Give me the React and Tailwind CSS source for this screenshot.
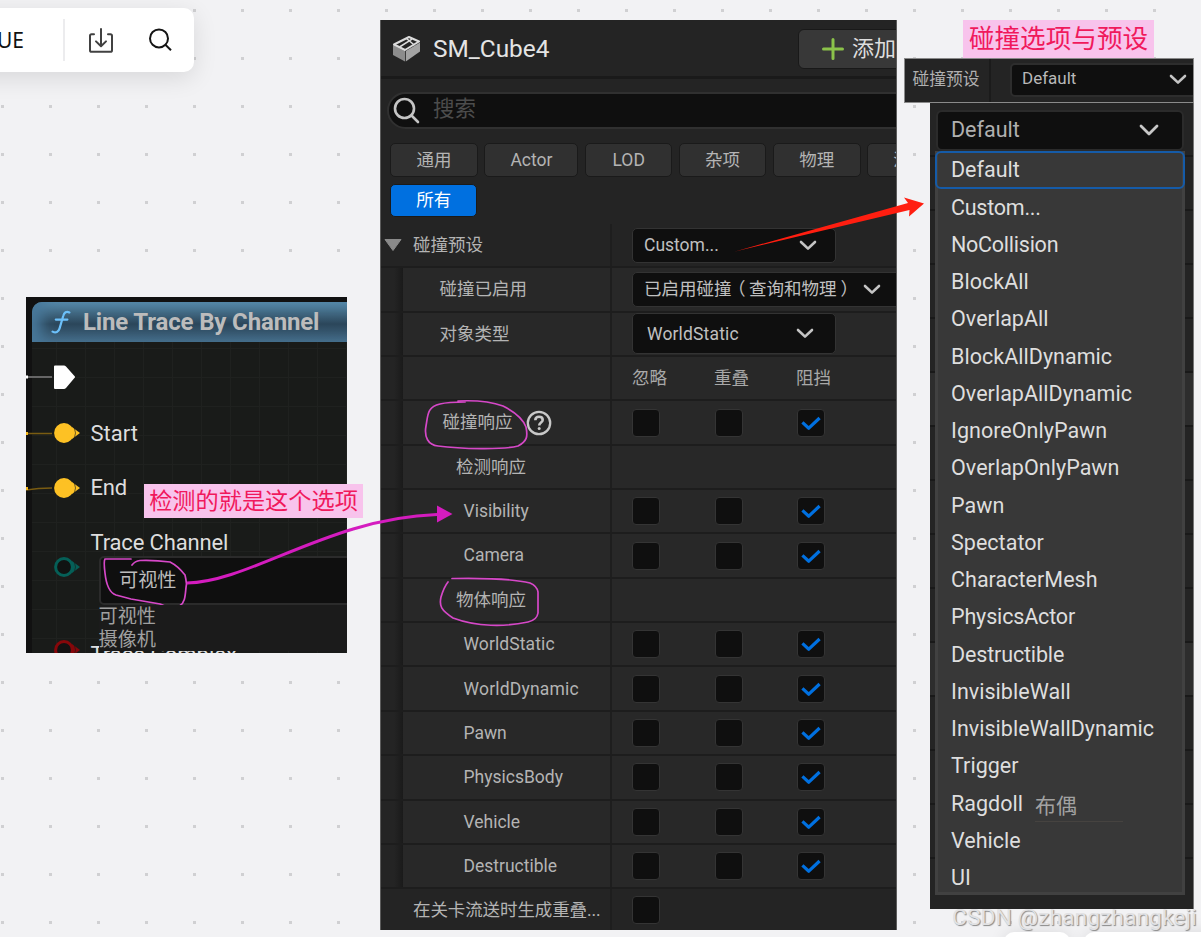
import React from "react";

const sans = "font-['Roboto','Noto_Sans_CJK_SC',sans-serif]";

function Caret({ className = "" }) {
  return (
    <svg width="18" height="11" viewBox="0 0 18 11" className={"shrink-0 " + className} fill="none" stroke="#c4c4c4" strokeWidth="2.6" strokeLinecap="round" strokeLinejoin="round">
      <path d="M2 2 L9 8.6 L16 2" />
    </svg>
  );
}

function CheckBox({ checked }) {
  return (
    <span className="flex size-7 shrink-0 items-center justify-center rounded-[4px] border border-[#343434] bg-[#0f0f0f]">
      {checked && (
        <svg width="22" height="18" viewBox="0 0 22 18" fill="none" stroke="#0070e0" strokeWidth="3.2" strokeLinejoin="round" strokeLinecap="butt">
          <path d="M2.4 8.4 L8.8 14.2 L19.6 4" />
        </svg>
      )}
    </span>
  );
}

function FilterButton({ label, width }) {
  return (
    <div className={"flex h-[34px] shrink-0 items-center justify-center rounded-[5px] border-[1.5px] border-[#1a1a1a] bg-[#303030] pt-px text-[17.5px] text-[#b4b4b4] " + width}>
      {label}
    </div>
  );
}

function Combo({ label, className, pad }) {
  return (
    <div className={"flex shrink-0 items-center rounded-[5px] border border-[#333] bg-[#0f0f0f] text-[17.5px] whitespace-nowrap text-[#c0c0c0] " + className}>
      <span className={"flex-1 " + pad}>{label}</span>
      <Caret />
    </div>
  );
}

function Row({ name, indent, nested = true, help, children }) {
  return (
    <div className={"flex h-[44.36px] shrink-0 border-b-2 border-[#1d1d1d] " + (nested ? "bg-[#282828]" : "bg-[#242424]")}>
      {nested && <div className="w-[22px] shrink-0 bg-linear-to-r from-[#242424] from-60% to-[#1a1a1a]" />}
      <div className={"flex shrink-0 items-center border-r-2 border-[#1e1e1e] text-[17.5px] whitespace-nowrap text-[#b4b4b4] " + (nested ? "w-[209px] " : "w-[231px] ") + indent}>
        {name}
        {help}
      </div>
      <div className="flex flex-1 items-center pl-5">{children}</div>
    </div>
  );
}

function Checks() {
  return (
    <div className="flex gap-[54.5px]">
      <CheckBox />
      <CheckBox />
      <CheckBox checked />
    </div>
  );
}

function Toolbar() {
  return (
    <div className="absolute top-2 left-[-40px] flex h-16 w-[234px] items-center rounded-[10px] bg-white shadow-[0_6px_24px_rgba(0,0,0,0.11)]">
      <span className="ml-[37px] w-[67px] font-['Noto_Sans','Noto_Sans_CJK_SC',sans-serif] text-[21px] leading-none text-[#111]">UE</span>
      <span className="-ml-[1px] h-[42px] w-[2px] bg-[#ececee]" />
      <svg className="-mt-px ml-[23px]" width="26" height="28" viewBox="0 0 26 28" fill="none" stroke="#414141" strokeWidth="2" strokeLinecap="round" strokeLinejoin="round">
        <path d="M6 8.2H3.6Q2 8.2 2 9.8V24.2Q2 25.8 3.6 25.8H22.4Q24 25.8 24 24.2V9.8Q24 8.2 22.4 8.2H20M13 3V20M8 15.4L13 20.2L18 15.4" />
      </svg>
      <svg className="-mt-px ml-[34px]" width="26" height="26" viewBox="0 0 26 26" fill="none" stroke="#151515" strokeWidth="2">
        <circle cx="11" cy="11.4" r="9" />
        <path d="M17.4 17.8L23 23.2" />
      </svg>
    </div>
  );
}

function Pin({ stroke, fill, wire }) {
  return (
    <svg width="62" height="24" viewBox="0 0 62 24" className="shrink-0">
      {wire && <path d={wire} stroke="#7a5c12" strokeWidth="1.5" fill="none" />}
      {wire && <rect x="0" y="11" width="2" height="3" fill="#f5b81c" />}
      <path d="M46 6 L54 12 L46 18Z" fill={stroke} />
      <circle cx="38" cy="12" r="8.4" fill={fill} stroke={stroke} strokeWidth="3" />
      <path d="M48 5.500 Q51 12 48 18.500" stroke="#191b19" strokeOpacity=".7" strokeWidth=".9" fill="none" />
    </svg>
  );
}

function Blueprint() {
  return (
    <div className="absolute top-[297px] left-[26px] h-[356px] w-[321px] overflow-hidden bg-[#111] pt-[5px] pl-[6px]">
      <div className="flex h-[351px] flex-col rounded-tl-[10px] bg-[#191b19] bg-[linear-gradient(#1f211f_1px,transparent_1px),linear-gradient(90deg,#1f211f_1px,transparent_1px)] bg-[length:29px_29px] bg-[position:24px_17px]">
        <div className="flex h-10 shrink-0 items-center overflow-hidden rounded-tl-[10px] bg-linear-to-b from-[#588cac] via-[#2b465a] via-55% to-[#446b87] pl-[19px] shadow-[inset_14px_0_14px_-4px_#48789a]">
          <svg width="20" height="24" viewBox="0 0 20 24" fill="none" stroke="#6cc0fa" strokeWidth="2.2" strokeLinecap="round">
            <path d="M18.4 2.4C15.5 .9 13.1 2.4 12.2 6L8.6 18.4C7.6 22 4.8 23.4 1.6 21.6M4.8 9.6H16.4" />
          </svg>
          <span className="-mt-px ml-[12px] text-[24px] font-bold tracking-[-0.15px] whitespace-nowrap text-[#bcbcbc]">Line Trace By Channel</span>
        </div>
        <div className="-ml-[6px] flex h-[70px] shrink-0 items-center">
          <svg width="52" height="28" viewBox="0 0 52 28">
            <path d="M0 14H26" stroke="#666" strokeWidth="2" />
            <path d="M0 14H2" stroke="#fff" strokeWidth="3" />
            <path d="M29 2.500H38Q39 2.500 40 3.500L48 12.5Q50 14 48 15.5L40 25Q39 26 38 26H29Q28 26 28 25V3.500Q28 2.500 29 2.500Z" fill="#fff" />
          </svg>
        </div>
        <div className="-ml-[6px] flex h-[42px] shrink-0 items-center text-[22px] text-[#dedede]">
          <Pin stroke="#fdc124" fill="#fdc124" wire="M0 12.5H26" />
          <span className="ml-[2.500px]">Start</span>
        </div>
        <div className="-ml-[6px] mt-3 flex h-[43px] shrink-0 items-center text-[22px] text-[#dedede]">
          <Pin stroke="#fdc124" fill="#fdc124" wire="M0 14Q12 12 26 12" />
          <span className="ml-[2.500px] tracking-[-0.2px]">End</span>
        </div>
        <div className="-ml-[6px] mt-3 flex shrink-0 text-[22px] text-[#dedede]">
          <div className="flex flex-col gap-[59px] pt-[34px]">
            <Pin stroke="#055f57" fill="#101312" />
            <Pin stroke="#86070a" fill="#131212" />
          </div>
          <div className="flex flex-1 flex-col pl-[2.500px]">
            <span className="h-[35px] pt-[6px] leading-[32px] tracking-[-0.15px] whitespace-nowrap">Trace Channel</span>
            <div className="ml-2 flex h-[49px] w-[260px] shrink-0 items-center rounded-[5px] border-2 border-[#2b2b2b] bg-[#0f0f0f] pt-px pl-[18.500px] text-[19.2px] text-[#bcbcbc]">可视性</div>
            <div className="relative z-20 ml-2 h-[46px] shrink-0 bg-[#1b1b1b] text-[19.2px] leading-[23px] text-[#a0a0a0]">
              <div>可视性</div>
              <div>摄像机</div>
            </div>
            <span className="relative z-10 -mt-[9px] text-[22px] leading-[26px] whitespace-nowrap">Trace Complex</span>
          </div>
        </div>
      </div>
    </div>
  );
}

function Details() {
  return (
    <div className="absolute top-5 left-[380px] flex h-[910px] w-[517px] flex-col overflow-hidden border-r border-l border-[#5c5c5c] bg-[#242424]">
      <div className="flex h-[59px] shrink-0 items-center border-b-[3px] border-[#1a1a1a] pt-px pl-3">
        <svg width="28" height="26" viewBox="0 0 28 26">
          <path d="M0 9L12 15V25.500L0 19Z" fill="#8c8c8c" />
          <path d="M12.800 15L27 6.500V15.500L12.800 25.500Z" fill="#a3a3a3" />
          <path d="M1 8.500L16 1L26 5.500L12 14Z" fill="#242424" stroke="#dcdcdc" strokeWidth="2" strokeLinejoin="round" />
          <path d="M13.500 2.500L21.500 9.200M6.500 11L19 3.200" stroke="#dcdcdc" strokeWidth="1.500" />
        </svg>
        <span className="ml-[12px] pt-px text-[24.4px] text-[#e4e4e4]">SM_Cube4</span>
        <div className="-mr-[21.500px] ml-auto flex h-[40px] w-[120px] shrink-0 items-center rounded-[6px] border-[1.5px] border-[#191919] bg-[#383838] pl-[22.500px]">
          <svg width="24" height="24" viewBox="0 0 24 24" stroke="#8bc24a" strokeWidth="3" strokeLinecap="round">
            <path d="M12 2.500V21.500M2.500 12H21.500" />
          </svg>
          <span className="ml-[7px] text-[22px] whitespace-nowrap text-[#dedede]">添加</span>
        </div>
      </div>
      <div className="mt-[13px] ml-[6px] flex h-[37px] w-[600px] shrink-0 items-center rounded-full border-2 border-[#303030] bg-[#0f0f0f] pl-1">
        <svg width="28" height="28" viewBox="0 0 28 28" fill="none" stroke="#c4c4c4" strokeWidth="2.600" strokeLinecap="round">
          <circle cx="11.500" cy="11.500" r="9.500" />
          <path d="M18.500 18.500L25 25" />
        </svg>
        <span className="-mt-[2px] ml-[12px] text-[21.500px] text-[#4c4c4c]">搜索</span>
      </div>
      <div className="mt-[14px] flex shrink-0 gap-[6.700px] pl-[9.300px]">
        <FilterButton label="通用" width="w-[87.500px]" />
        <FilterButton label="Actor" width="w-[94px]" />
        <FilterButton label="LOD" width="w-[87px]" />
        <FilterButton label="杂项" width="w-[87.500px]" />
        <FilterButton label="物理" width="w-[87.500px]" />
        <FilterButton label="流送" width="w-[87px]" />
      </div>
      <div className="mt-[6.500px] ml-[9.300px] flex h-[33px] w-[87px] shrink-0 items-center justify-center rounded-[5px] border border-[#1a1a1a] bg-[#0070e0] text-[17.500px] text-white">所有</div>
      <div className="mt-[7.400px] flex flex-col">
        <Row
          nested={false}
          indent="pl-[3px]"
          name={
            <>
              <svg width="18" height="12" viewBox="0 0 18 12" className="mr-[11px]"><path d="M1 .5H17L9 11.500Z" fill="#8a8a8a" stroke="#8a8a8a" strokeLinejoin="round" /></svg>
              碰撞预设
            </>
          }
        >
          <Combo label="Custom..." className="h-[35px] w-[204px] pr-[18.500px]" pad="pl-[11px]" />
        </Row>
        <Row name="碰撞已启用" indent="pl-[36.500px]">
          <Combo
            label={
              <>
                已启用碰撞<span className="inline-block -translate-x-[3.500px]">（</span>查询和物理<span className="inline-block translate-x-[4px]">）</span>
              </>
            }
            className="h-[35px] w-[290px] pr-[40.500px]"
            pad="pl-[11px]"
          />
        </Row>
        <Row name="对象类型" indent="pl-[36.500px]">
          <Combo label="WorldStatic" className="h-[41px] w-[204px] pr-[21.500px]" pad="pl-[14px] tracking-[0.15px]" />
        </Row>
        <Row name="" indent="">
          <div className="flex gap-[47px] text-[17.500px] text-[#a8a8a8]">
            <span>忽略</span>
            <span>重叠</span>
            <span>阻挡</span>
          </div>
        </Row>
        <Row
          name="碰撞响应"
          indent="pl-[39.500px]"
          help={
            <svg width="26" height="26" viewBox="0 0 26 26" fill="none" stroke="#c8c8c8" strokeWidth="2.300" className="ml-[13.500px]">
              <circle cx="13" cy="13" r="11.200" />
              <path d="M9.300 10.200C9.400 7.900 10.900 6.800 13 6.800S16.700 8 16.700 9.900C16.700 12.500 13.200 12.500 13.200 15.400" strokeWidth="2.600" />
              <circle cx="13.200" cy="18.600" r="1.500" fill="#c8c8c8" stroke="none" />
            </svg>
          }
        >
          <Checks />
        </Row>
        <Row name="检测响应" indent="pl-[53px]" />
        <Row name="Visibility" indent="pl-[60.500px]"><Checks /></Row>
        <Row name="Camera" indent="pl-[60.500px]"><Checks /></Row>
        <Row name="物体响应" indent="pl-[53px]" />
        <Row name="WorldStatic" indent="pl-[60.500px] tracking-[0.1px]"><Checks /></Row>
        <Row name="WorldDynamic" indent="pl-[60.500px] tracking-[0.2px]"><Checks /></Row>
        <Row name="Pawn" indent="pl-[60.500px]"><Checks /></Row>
        <Row name="PhysicsBody" indent="pl-[60.500px]"><Checks /></Row>
        <Row name="Vehicle" indent="pl-[60.500px]"><Checks /></Row>
        <Row name="Destructible" indent="pl-[60.500px]"><Checks /></Row>
        <Row nested={false} name="在关卡流送时生成重叠..." indent="pl-[32px] tracking-[-0.1px]"><CheckBox /></Row>
      </div>
    </div>
  );
}

const presets = [
  "Custom...", "NoCollision", "BlockAll", "OverlapAll", "BlockAllDynamic", "OverlapAllDynamic",
  "IgnoreOnlyPawn", "OverlapOnlyPawn", "Pawn", "Spectator", "CharacterMesh", "PhysicsActor",
  "Destructible", "InvisibleWall", "InvisibleWallDynamic", "Trigger", "Ragdoll", "Vehicle", "UI",
];

function presetTracking(name) {
  if (name === "Custom..." || name === "NoCollision") return "tracking-[-0.25px]";
  if (name === "Destructible" || name === "PhysicsActor") return "tracking-[-0.15px]";
  return "tracking-[0.03px]";
}

function PresetHeader() {
  return (
    <div className="absolute top-[58px] left-[904px] flex h-[45px] w-[290px] items-center overflow-hidden border border-[#8a8a8a] bg-[#242424]">
      <span className="flex h-full w-[86px] shrink-0 items-center border-r-2 border-[#1b1b1b] pb-[2px] pl-[7.500px] text-[16.800px] whitespace-nowrap text-[#b0b0b0]">碰撞预设</span>
      <div className="-mt-[2px] ml-[19px] flex h-[34px] w-[200px] shrink-0 items-center rounded-[5px] border-2 border-[#2d2d2d] bg-[#0f0f0f] pb-px pl-[10px] text-[17px] text-[#b8b8b8]">
        <span className="w-[146.500px]">Default</span>
        <Caret />
      </div>
    </div>
  );
}

function PresetMenu() {
  return (
    <div className="absolute top-[103px] left-[930px] h-[806px] w-[264px] border-r border-[#777] bg-[#242424] bg-[linear-gradient(transparent_52px,#191919_52px),linear-gradient(transparent_270px,#2d2d2d_270px,#2d2d2d_322px,transparent_322px,transparent_540px,#2d2d2d_540px,#2d2d2d_592px,transparent_592px)] bg-[length:100%_54px,100%_100%] px-[5px] pt-[7px]">
      <div className="ml-[1px] flex h-[41px] w-[248px] items-center rounded-[6px] border-2 border-[#2b2b2b] bg-[#0f0f0f] pl-[13px] text-[21.500px] text-[#b0b0b0]">
        <span className="w-[188px]">Default</span>
        <svg width="20" height="14" viewBox="0 0 20 14" fill="none" stroke="#c8c8c8" strokeWidth="2.800" strokeLinecap="round" strokeLinejoin="round">
          <path d="M2 2L10 10L18 2" />
        </svg>
      </div>
      <div className="flex h-[744px] w-[250px] flex-col border-[3px] border-t-0 border-[#414141] bg-[#383838] text-[21.500px] text-[#dedede]">
        <div className="-mx-[3px] flex h-[38px] shrink-0 items-center rounded-[6px] border-2 border-[#155ba8] pl-[14px]">Default</div>
        <div className="flex flex-col">
          {presets.map((p) => (
            <div key={p} className="flex h-[37.280px] items-center pl-[13px] whitespace-nowrap">
              <span className={presetTracking(p)}>{p}</span>
              {p === "Ragdoll" && <span className="mt-[6px] ml-3 w-[88px] border-b border-[#464340] text-[21px] leading-[29px] text-[#a2a2a2]">布偶</span>}
            </div>
          ))}
        </div>
      </div>
    </div>
  );
}

function Annotations() {
  return (
    <svg className="pointer-events-none absolute inset-0" width="1201" height="937" viewBox="0 0 1201 937" fill="none">
      <g stroke="#d648c8" strokeWidth="1.700" strokeLinecap="round">
        <path d="M131 559H105Q103.500 561 105 573Q107 592 116 595L131 599L160 604C165 607 174 608 180 605.500C186 602 185 593 186.500 584Q186 579 185 575Q178 566 170 562Q155 560 140 560.500Q135 561 132 565" />
        <path d="M458 401C478 400 492 402 503 406C515 412 523 419 526 427C528 437 527 441 518 446C504 450 460 449 438 446C428 445 424 437 426 426C428 415 427 407 440 404Q448 402 465 402" />
        <path d="M452 578.500C480 578 510 578 530 583Q537 586 538 592L538 613Q537 620 528 622C505 627 477 627 453 618C441 610 439 606 441 597Q444 587 448 582" />
      </g>
      <path d="M187 583C250 582 330 518 437 514.500" stroke="#d41cbf" strokeWidth="3" />
      <path d="M437 505.500L452.500 514L437 522.500Z" fill="#d41cbf" />
      <path d="M735 251.500L908 203L904 197.500L924 203.500L909 216.500L909.500 210Z" fill="#ff1e10" />
    </svg>
  );
}

export default function App() {
  return (
    <div className={"relative h-[937px] w-[1201px] overflow-hidden bg-[#f2f2f4] " + sans}>
      <svg className="absolute inset-0" width="1201" height="937">
        <defs>
          <pattern id="dots" width="48" height="48" patternUnits="userSpaceOnUse">
            <rect x="1" y="9" width="3" height="3" fill="#d0d0d2" />
          </pattern>
        </defs>
        <rect width="1201" height="937" fill="url(#dots)" />
      </svg>
      <Toolbar />
      <Blueprint />
      <Details />
      <div className="absolute top-[20px] left-[963px] flex h-[38px] w-[191px] items-center justify-center bg-[#f8c3ec] pt-px text-[25.600px] whitespace-nowrap text-[#f0195c]">碰撞选项与预设</div>
      <PresetHeader />
      <PresetMenu />
      <div className="absolute top-[484px] left-[144px] flex h-[34px] w-[219px] items-center justify-center bg-[#f8c3ec] text-[23.200px] whitespace-nowrap text-[#f0195c]">检测的就是这个选项</div>
      <Annotations />
      <div className="absolute top-[932px] left-[1004px] flex gap-[14px]">
        <div className="h-10 w-[66px] rounded-[10px] bg-white shadow-[0_0_16px_rgba(0,0,0,0.1)]" />
        <div className="h-10 w-[160px] rounded-[10px] bg-white shadow-[0_0_16px_rgba(0,0,0,0.1)]" />
      </div>
      <div className="absolute top-[904px] left-[952px] text-[22.900px] leading-[28px] whitespace-nowrap text-[#e2e2e4] [text-shadow:1px_1px_1px_#888]">CSDN @zhangzhangkeji</div>
    </div>
  );
}
